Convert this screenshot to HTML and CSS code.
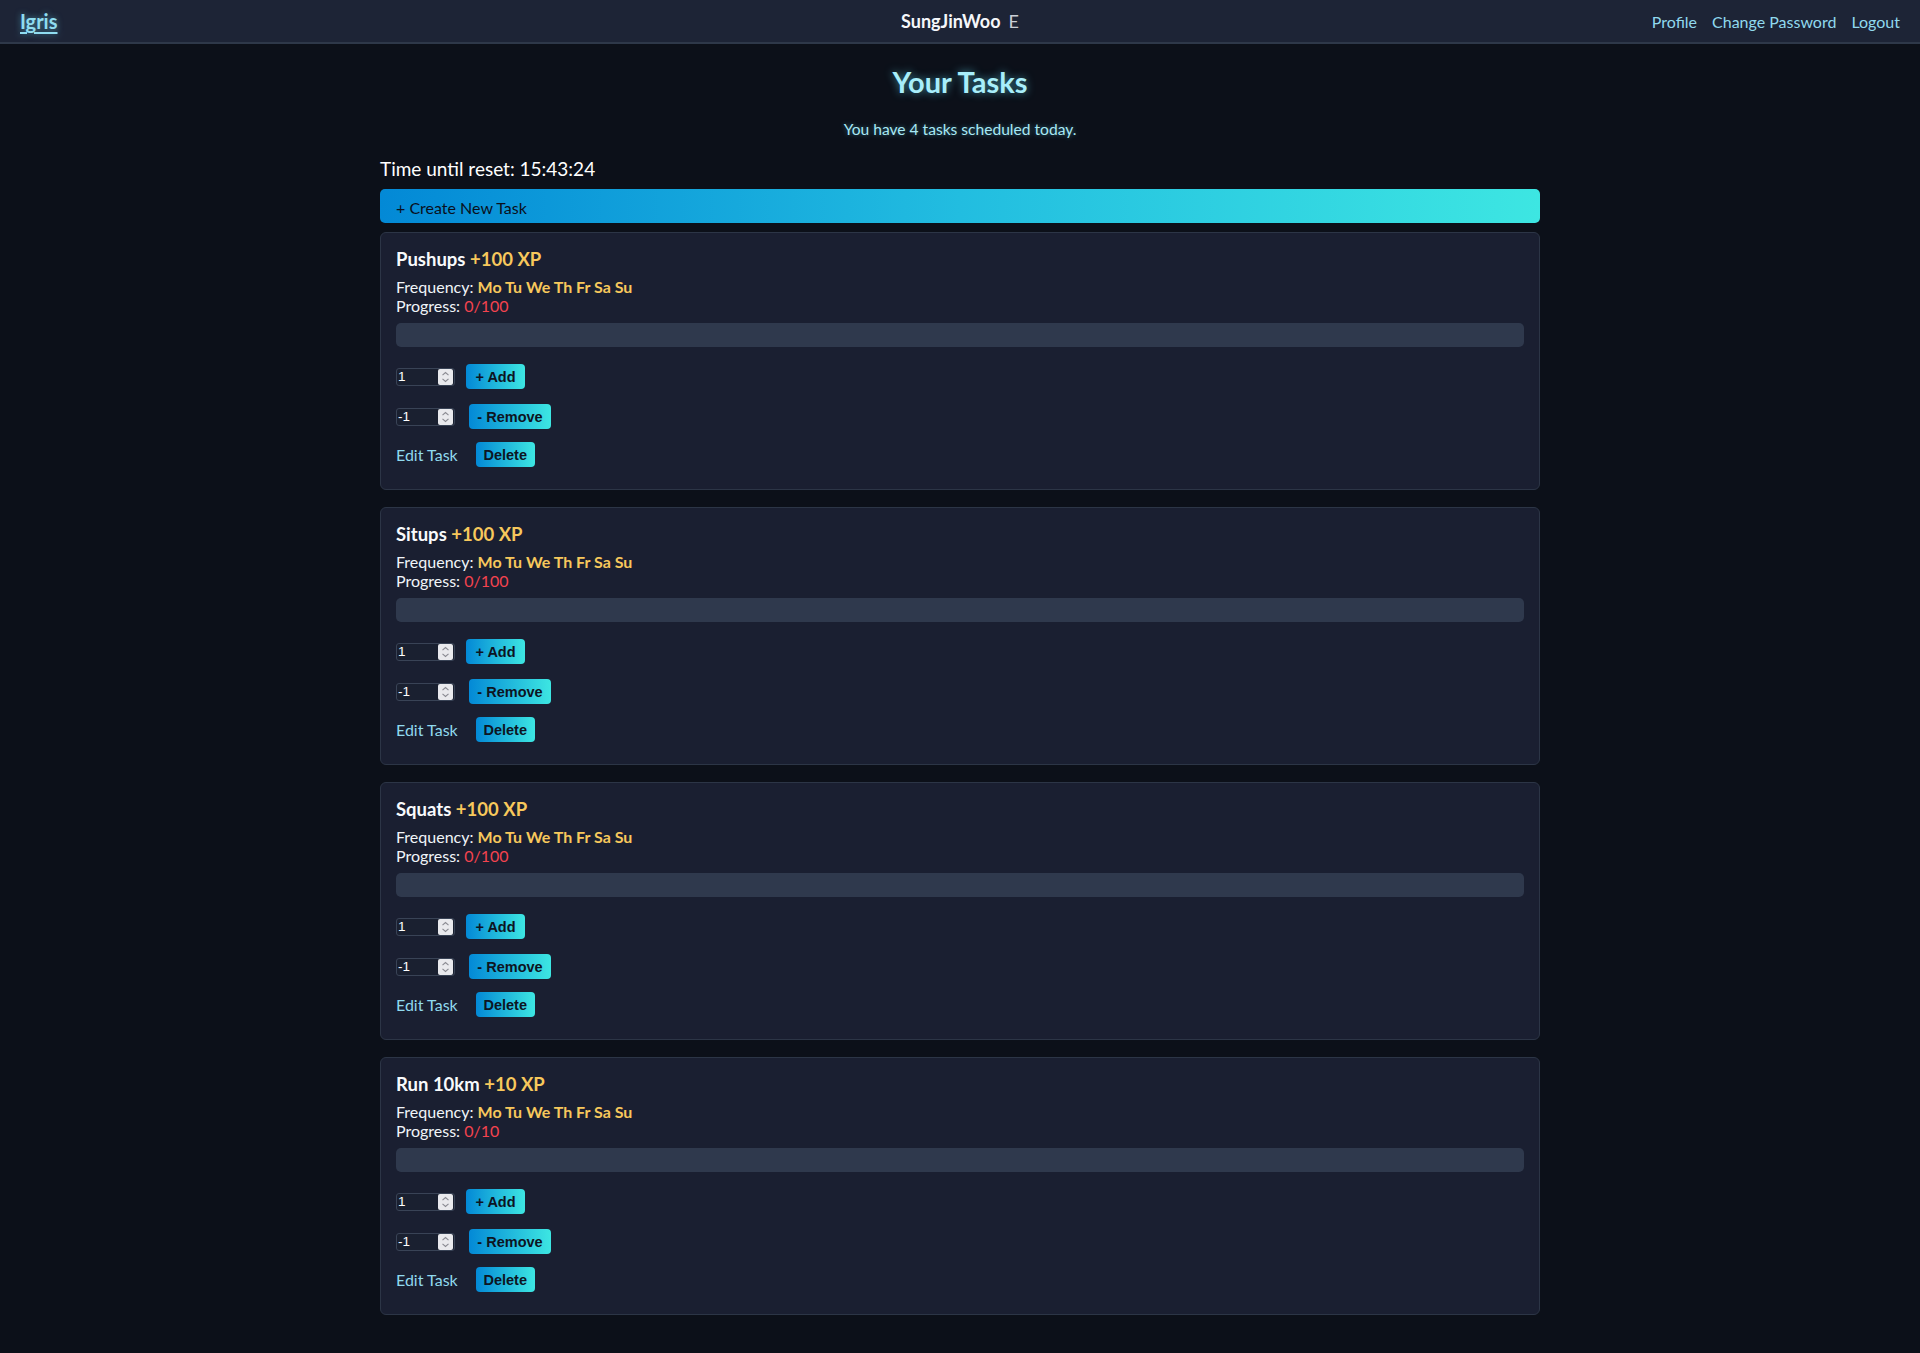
FILE: index.html
```html
<!DOCTYPE html>
<html lang="en">
<head>
<meta charset="utf-8">
<title>Your Tasks</title>
<link rel="stylesheet" href="styles.css">
</head>
<body>
<header class="topbar">
  <a class="brand" href="#">Igris</a>
  <div class="user"><span class="user-name">SungJinWoo</span><span class="user-rank">E</span></div>
  <nav class="nav">
    <a href="#">Profile</a>
    <a href="#">Change Password</a>
    <a href="#">Logout</a>
  </nav>
</header>

<main class="container">
  <h1 class="page-title">Your Tasks</h1>
  <p class="subtitle">You have 4 tasks scheduled today.</p>
  <div class="timer">Time until reset: 15:43:24</div>
  <button class="create-btn">+ Create New Task</button>

  <section class="card">
    <h3 class="task-title">Pushups <span class="xp">+100 XP</span></h3>
    <div class="meta">Frequency: <span class="days">Mo Tu We Th Fr Sa Su</span></div>
    <div class="meta">Progress: <span class="prog">0/100</span></div>
    <div class="bar"></div>
    <div class="row"><div class="num"><span class="num-val">1</span><span class="spin"><svg viewBox="0 0 15 18" width="15" height="18"><path d="M4.5 7.2 7.5 4.5 10.5 7.2M4.5 10.8 7.5 13.5 10.5 10.8" fill="none" stroke="#8a8a92" stroke-width="1.1"/></svg></span></div><button class="btn btn-add">+ Add</button></div>
    <div class="row"><div class="num"><span class="num-val">-1</span><span class="spin"><svg viewBox="0 0 15 18" width="15" height="18"><path d="M4.5 7.2 7.5 4.5 10.5 7.2M4.5 10.8 7.5 13.5 10.5 10.8" fill="none" stroke="#8a8a92" stroke-width="1.1"/></svg></span></div><button class="btn btn-remove">- Remove</button></div>
    <div class="row"><a class="edit" href="#">Edit Task</a><button class="btn btn-delete">Delete</button></div>
  </section>

  <section class="card">
    <h3 class="task-title">Situps <span class="xp">+100 XP</span></h3>
    <div class="meta">Frequency: <span class="days">Mo Tu We Th Fr Sa Su</span></div>
    <div class="meta">Progress: <span class="prog">0/100</span></div>
    <div class="bar"></div>
    <div class="row"><div class="num"><span class="num-val">1</span><span class="spin"><svg viewBox="0 0 15 18" width="15" height="18"><path d="M4.5 7.2 7.5 4.5 10.5 7.2M4.5 10.8 7.5 13.5 10.5 10.8" fill="none" stroke="#8a8a92" stroke-width="1.1"/></svg></span></div><button class="btn btn-add">+ Add</button></div>
    <div class="row"><div class="num"><span class="num-val">-1</span><span class="spin"><svg viewBox="0 0 15 18" width="15" height="18"><path d="M4.5 7.2 7.5 4.5 10.5 7.2M4.5 10.8 7.5 13.5 10.5 10.8" fill="none" stroke="#8a8a92" stroke-width="1.1"/></svg></span></div><button class="btn btn-remove">- Remove</button></div>
    <div class="row"><a class="edit" href="#">Edit Task</a><button class="btn btn-delete">Delete</button></div>
  </section>

  <section class="card">
    <h3 class="task-title">Squats <span class="xp">+100 XP</span></h3>
    <div class="meta">Frequency: <span class="days">Mo Tu We Th Fr Sa Su</span></div>
    <div class="meta">Progress: <span class="prog">0/100</span></div>
    <div class="bar"></div>
    <div class="row"><div class="num"><span class="num-val">1</span><span class="spin"><svg viewBox="0 0 15 18" width="15" height="18"><path d="M4.5 7.2 7.5 4.5 10.5 7.2M4.5 10.8 7.5 13.5 10.5 10.8" fill="none" stroke="#8a8a92" stroke-width="1.1"/></svg></span></div><button class="btn btn-add">+ Add</button></div>
    <div class="row"><div class="num"><span class="num-val">-1</span><span class="spin"><svg viewBox="0 0 15 18" width="15" height="18"><path d="M4.5 7.2 7.5 4.5 10.5 7.2M4.5 10.8 7.5 13.5 10.5 10.8" fill="none" stroke="#8a8a92" stroke-width="1.1"/></svg></span></div><button class="btn btn-remove">- Remove</button></div>
    <div class="row"><a class="edit" href="#">Edit Task</a><button class="btn btn-delete">Delete</button></div>
  </section>

  <section class="card">
    <h3 class="task-title">Run 10km <span class="xp">+10 XP</span></h3>
    <div class="meta">Frequency: <span class="days">Mo Tu We Th Fr Sa Su</span></div>
    <div class="meta">Progress: <span class="prog">0/10</span></div>
    <div class="bar"></div>
    <div class="row"><div class="num"><span class="num-val">1</span><span class="spin"><svg viewBox="0 0 15 18" width="15" height="18"><path d="M4.5 7.2 7.5 4.5 10.5 7.2M4.5 10.8 7.5 13.5 10.5 10.8" fill="none" stroke="#8a8a92" stroke-width="1.1"/></svg></span></div><button class="btn btn-add">+ Add</button></div>
    <div class="row"><div class="num"><span class="num-val">-1</span><span class="spin"><svg viewBox="0 0 15 18" width="15" height="18"><path d="M4.5 7.2 7.5 4.5 10.5 7.2M4.5 10.8 7.5 13.5 10.5 10.8" fill="none" stroke="#8a8a92" stroke-width="1.1"/></svg></span></div><button class="btn btn-remove">- Remove</button></div>
    <div class="row"><a class="edit" href="#">Edit Task</a><button class="btn btn-delete">Delete</button></div>
  </section>
</main>
</body>
</html>
```

FILE: styles.css
```css
* { box-sizing: border-box; }

html, body {
  margin: 0;
  padding: 0;
  background: #0c1019;
  color: #f1f5f9;
  font-family: Lato, "Noto Sans", sans-serif;
}

.topbar {
  height: 44px;
  background: #1d2436;
  border-bottom: 2px solid #2e3849;
  display: grid;
  grid-template-columns: 1fr auto 1fr;
  align-items: center;
  padding: 0 20px;
}

.brand {
  justify-self: start;
  font-size: 20px;
  font-weight: 700;
  color: #8fdcf0;
  text-decoration: underline;
  text-underline-offset: 3px;
  text-shadow: 0 0 6px rgba(110, 220, 245, 0.55);
}

.user {
  display: flex;
  align-items: center;
  gap: 8px;
  font-size: 18px;
}

.user-name {
  font-weight: 700;
  color: #f5f7fa;
}

.user-rank {
  color: #c9ced6;
  font-size: 18px;
}

.nav {
  justify-self: end;
  display: flex;
  gap: 15px;
}

.nav a {
  color: #90d9ee;
  text-decoration: none;
  font-size: 16px;
}

.container {
  width: 1160px;
  margin: 0 auto;
  padding-bottom: 35px;
}

.page-title {
  margin: 0;
  padding-top: 21px;
  text-align: center;
  font-size: 29px;
  line-height: 34px;
  font-weight: 700;
  color: #a8eefa;
  text-shadow: 0 0 8px rgba(100, 225, 250, 0.6);
}

.subtitle {
  margin: 21px 0 0;
  text-align: center;
  font-size: 15.6px;
  line-height: 18px;
  color: #a8e8f4;
  text-shadow: 0 0 5px rgba(100, 225, 250, 0.45);
}

.timer {
  margin-top: 19px;
  font-size: 19px;
  line-height: 24px;
  color: #ffffff;
}

.create-btn {
  display: block;
  width: 100%;
  height: 34px;
  margin-top: 8px;
  border: none;
  border-radius: 5px;
  background: linear-gradient(90deg, #0389d6 0%, #22bde0 50%, #3de6e2 100%);
  color: #0a101c;
  font-family: Lato, "Noto Sans", sans-serif;
  font-size: 16px;
  text-align: left;
  padding: 2px 16px 0;
}

.card {
  margin-top: 9px;
  margin-bottom: 17px;
  background: #1a1f31;
  border: 1px solid #2c3546;
  border-radius: 6px;
  padding: 14px 15px 22px;
}

.card + .card { margin-top: 0; }

.task-title {
  margin: 0 0 6px;
  font-size: 18.5px;
  line-height: 24px;
  font-weight: 700;
  color: #f8fafc;
}

.xp {
  color: #f7c85c;
}

.meta {
  font-size: 16px;
  line-height: 19px;
  color: #f1f5f9;
}

.days {
  color: #f7c85c;
  font-weight: 700;
}

.prog {
  color: #f4434f;
}

.bar {
  height: 24px;
  margin-top: 8px;
  margin-bottom: 17px;
  background: #2f394d;
  border-radius: 5px;
}

.row {
  display: flex;
  align-items: center;
  height: 25px;
  margin-bottom: 15px;
}

.row:nth-last-child(2) { margin-bottom: 13px; }
.row:last-child { margin-bottom: 0; }

.num {
  width: 59px;
  height: 18px;
  border: 1px solid #394356;
  border-radius: 3px;
  background: #1a2030;
  display: flex;
  align-items: center;
  justify-content: space-between;
  margin-right: 11px;
  overflow: hidden;
}

.num-val {
  font-family: "Liberation Sans", Arial, sans-serif;
  font-size: 13.5px;
  color: #ffffff;
  padding-left: 1px;
}

.spin {
  width: 15px;
  height: 16px;
  margin-right: 1px;
  background: #e9e9ed;
  border-radius: 2px;
  display: flex;
  align-items: center;
  justify-content: center;
}

.spin svg { display: block; }

.btn {
  height: 25px;
  border: none;
  border-radius: 4px;
  background: linear-gradient(90deg, #0389d6 0%, #3de6e2 100%);
  color: #0d1422;
  font-family: "Liberation Sans", Arial, sans-serif;
  font-weight: 700;
  font-size: 14.5px;
  padding: 0;
  text-align: center;
}

.btn-add { width: 59px; }
.btn-remove { width: 82px; margin-left: 3px; }
.btn-delete { width: 59px; }

.edit {
  color: #90d9ee;
  text-decoration: none;
  font-size: 16px;
  margin-right: 18px;
}
```
